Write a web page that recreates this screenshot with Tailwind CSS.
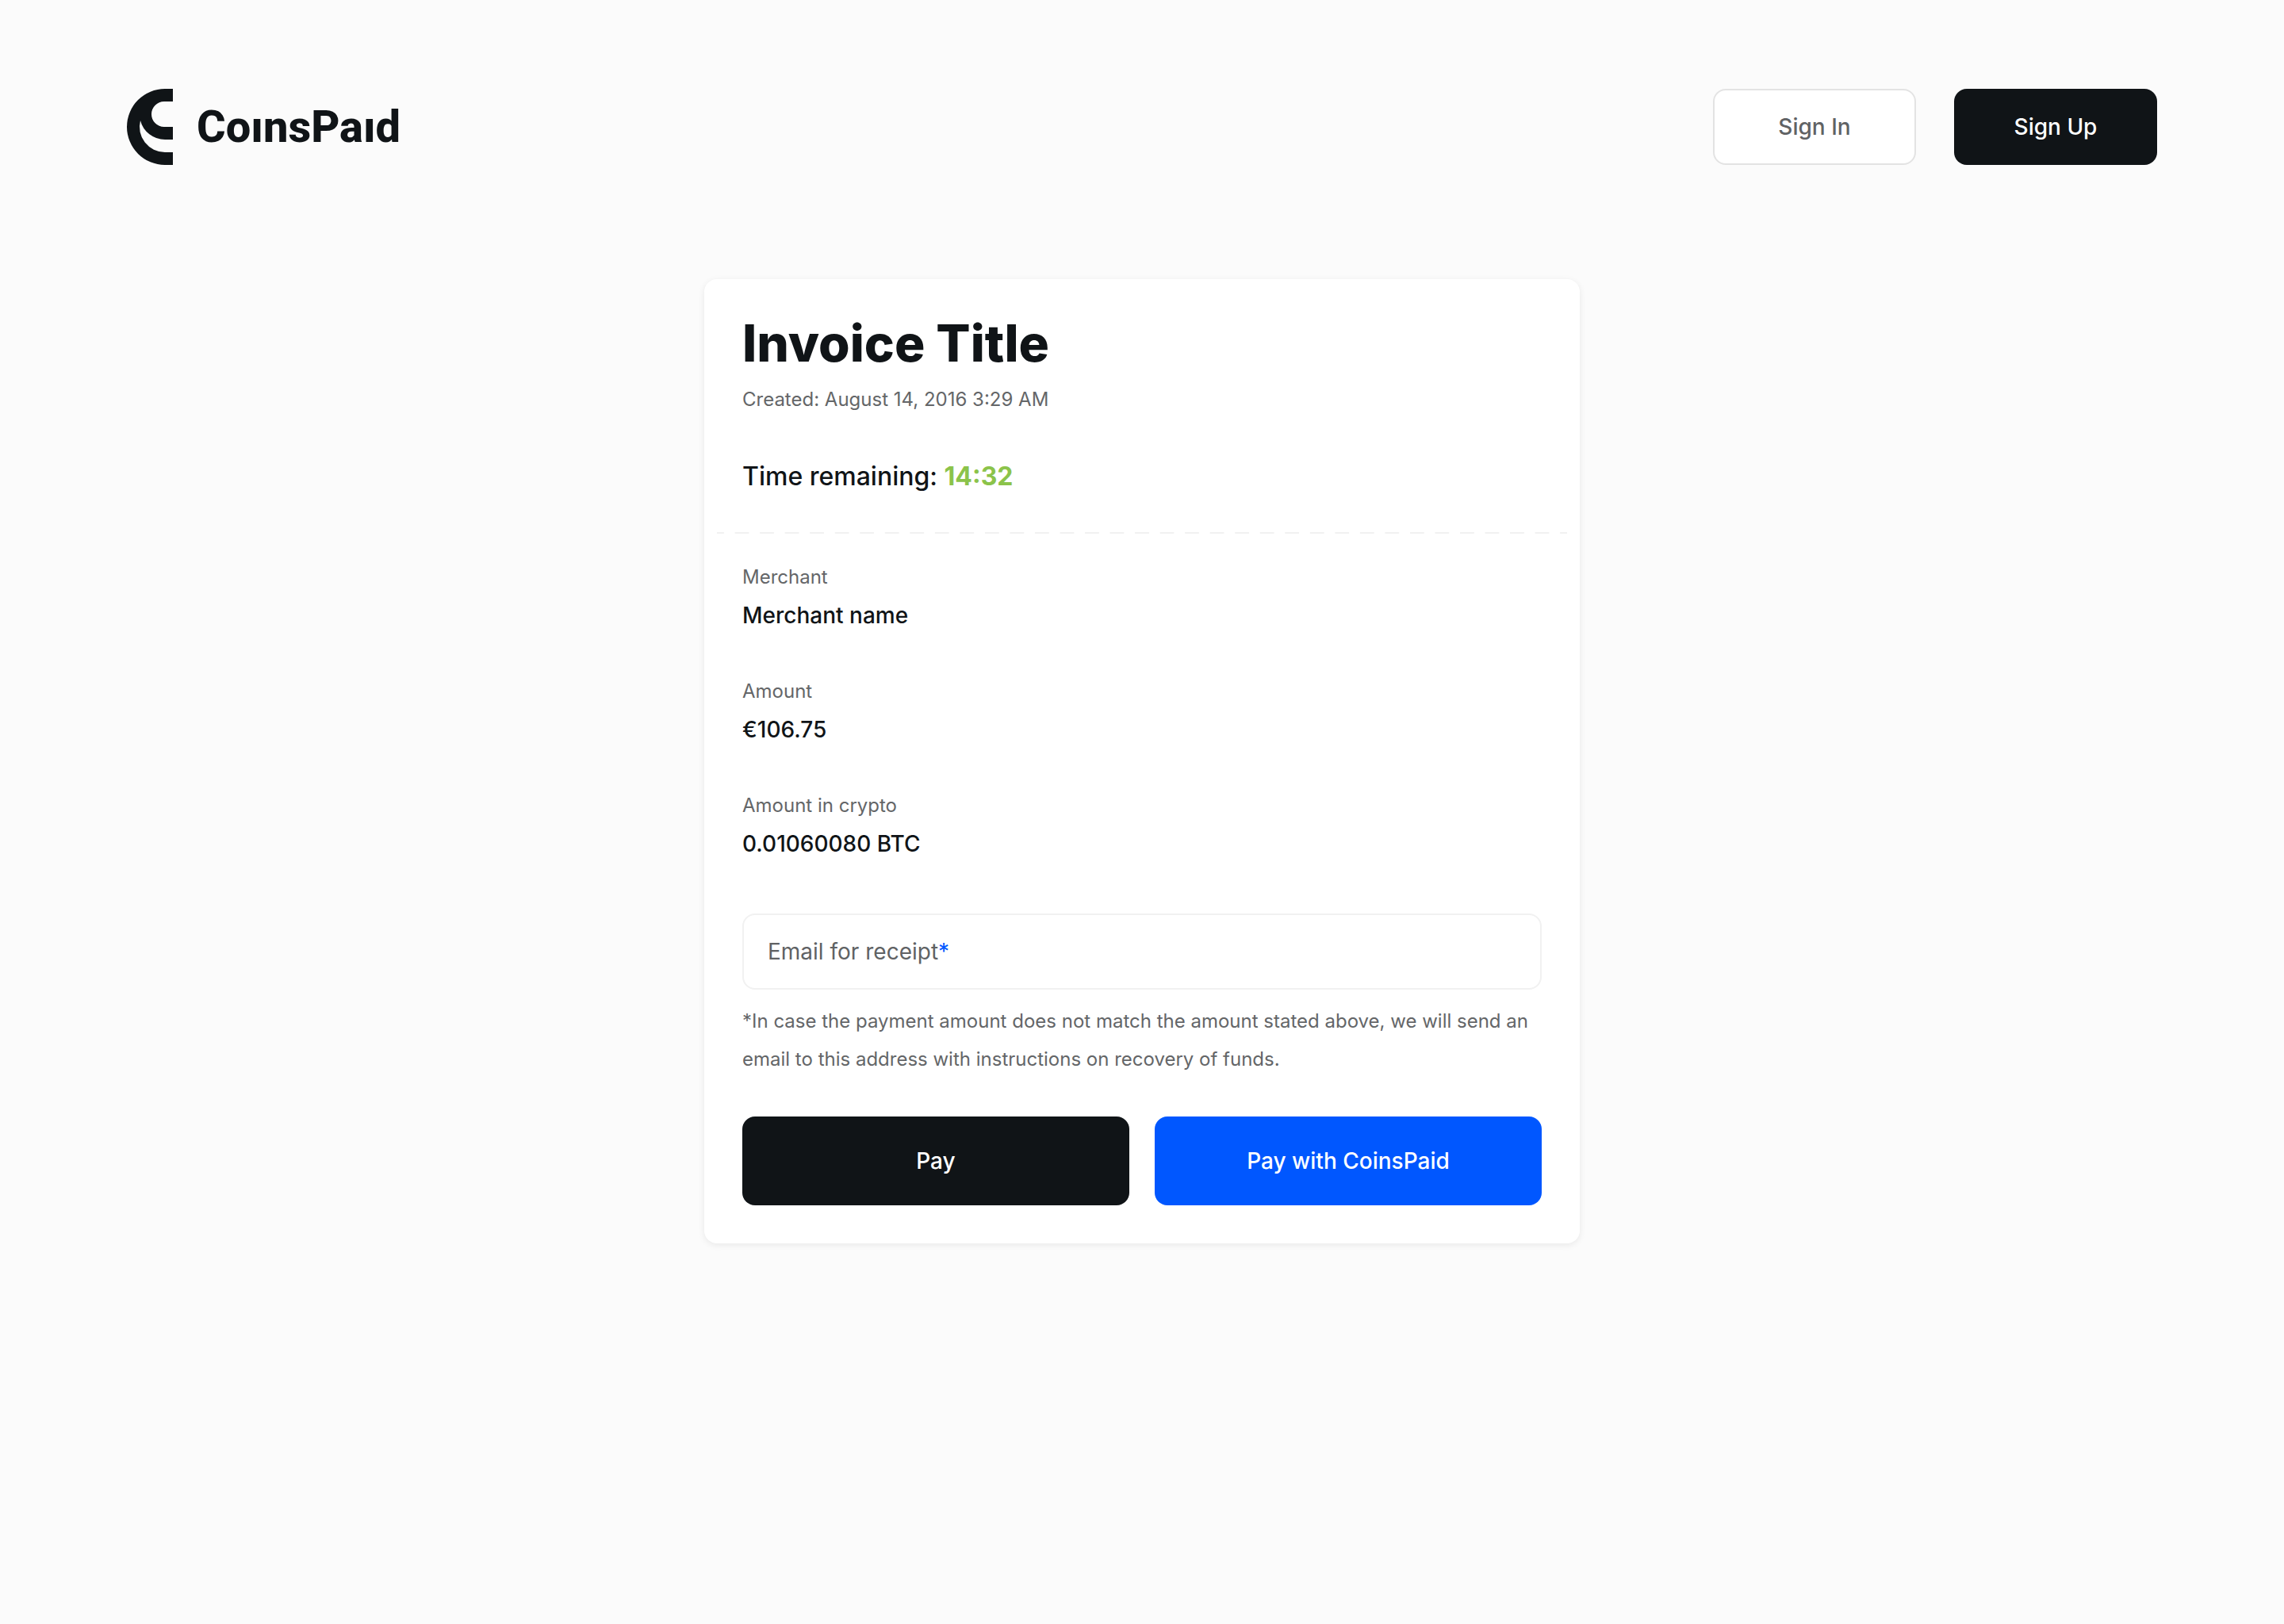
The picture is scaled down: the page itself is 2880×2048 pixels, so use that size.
<!DOCTYPE html>
<html lang="en">
<head>
<meta charset="utf-8">
<meta name="viewport" content="width=device-width, initial-scale=1">
<title>Invoice – CoinsPaid</title>
<script src="https://cdn.jsdelivr.net/npm/@tailwindcss/browser@4"></script>
</head>
<body class="min-h-screen bg-[#fbfbfb] font-['Inter',sans-serif] text-[28px] leading-[48px] text-[#101417]">
  <header class="flex items-center justify-between px-40 pt-28">
    <a href="#" aria-label="CoinsPaid" class="flex items-center gap-[30px]">
      <svg class="h-24 w-[58px]" viewBox="0 0 58 96" fill="currentColor" aria-hidden="true">
        <path d="M58 0H48A48 48 0 0 0 48 96H58V80H48A32 32 0 0 1 17 40A32 32 0 0 0 48 64H58V48H47A16 16 0 0 1 47 16H58Z"/>
      </svg>
      <span class="font-['Roboto',sans-serif] text-[56px] font-extrabold">CoınsPaıd</span>
    </a>
    <nav class="flex gap-12">
      <button type="button" class="h-24 w-64 rounded-2xl border-2 border-[#e3e3e3] bg-white font-medium text-[#606264]">Sign In</button>
      <button type="button" class="h-24 w-64 rounded-2xl bg-[#101417] font-medium text-white">Sign Up</button>
    </nav>
  </header>

  <main class="mx-auto mt-36 max-w-[1104px] rounded-2xl bg-white p-12 shadow-[0_2px_8px_rgba(0,0,0,0.08)]">
    <h1 class="text-[64px] leading-[66px] font-extrabold">Invoice Title</h1>
    <p class="mt-3.5 text-2xl leading-12 text-[#646668]">Created: August 14, 2016 3:29 AM</p>
    <p class="mt-12 text-[32px] leading-[50px] font-medium">Time remaining: <span class="font-bold text-[#8bc34a]">14:32</span></p>

    <div class="-mx-8 mt-[45px]">
      <svg class="block h-0.5 w-full" aria-hidden="true">
        <line x1="0" y1="1" x2="100%" y2="1" pathLength="1088" stroke="#f1f1f1" stroke-width="2" stroke-dasharray="18 14" stroke-dashoffset="9"/>
      </svg>
    </div>

    <dl class="mt-[31px] flex flex-col gap-12">
      <div>
        <dt class="text-2xl leading-12 text-[#646668]">Merchant</dt>
        <dd class="font-medium">Merchant name</dd>
      </div>
      <div>
        <dt class="text-2xl leading-12 text-[#646668]">Amount</dt>
        <dd class="font-medium">€106.75</dd>
      </div>
      <div>
        <dt class="text-2xl leading-12 text-[#646668]">Amount in crypto</dt>
        <dd class="font-medium">0.01060080 BTC</dd>
      </div>
    </dl>

    <form class="mt-16">
      <div class="relative">
        <input id="email" type="email" required placeholder=" " aria-describedby="email-note" class="peer block h-24 w-full rounded-2xl border-2 border-[#f1f1f1] bg-white px-[30px] outline-none focus:border-[#0057ff]">
        <label for="email" class="invisible absolute inset-y-0 left-8 flex items-center text-[#606264] peer-placeholder-shown:visible">Email for receipt<span class="text-[#0057ff]">*</span></label>
      </div>
      <p id="email-note" class="mt-4 text-2xl leading-12 text-[#646668]">*In case the payment amount does not match the amount stated above, we will send an email to this address with instructions on recovery of funds.</p>
      <div class="mt-12 grid grid-cols-2 gap-8">
        <button type="button" class="h-28 rounded-2xl bg-[#101417] font-medium text-white">Pay</button>
        <button type="submit" class="h-28 rounded-2xl bg-[#0057ff] font-medium text-white">Pay with CoinsPaid</button>
      </div>
    </form>
  </main>
</body>
</html>
